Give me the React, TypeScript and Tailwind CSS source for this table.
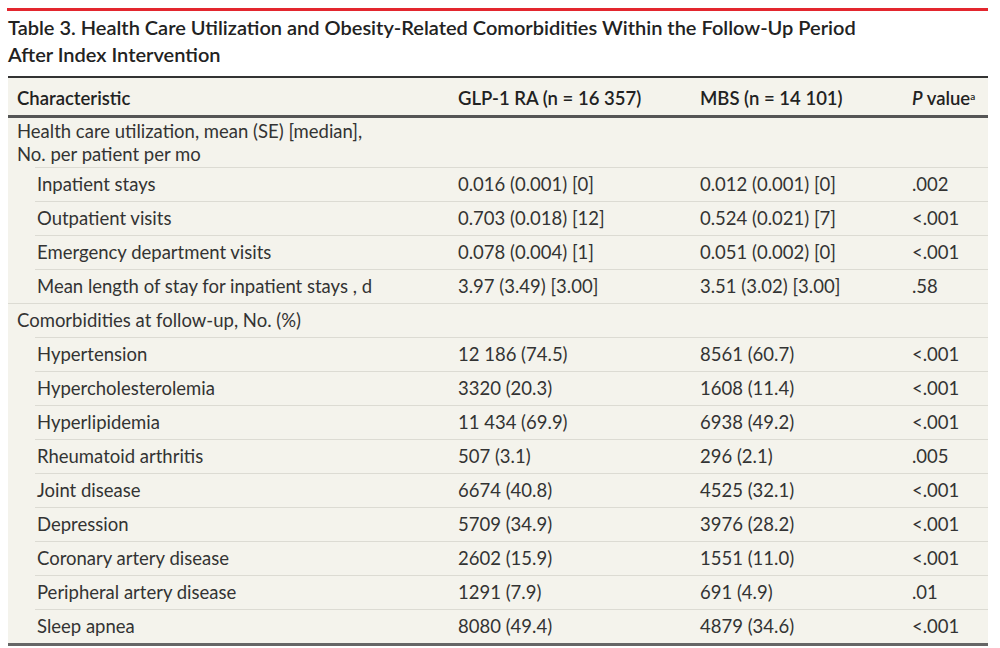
import React from 'react';

type Row = { label: string; glp: string; mbs: string; p: string };

const utilization: Row[] = [
  { label: 'Inpatient stays', glp: '0.016 (0.001) [0]', mbs: '0.012 (0.001) [0]', p: '.002' },
  { label: 'Outpatient visits', glp: '0.703 (0.018) [12]', mbs: '0.524 (0.021) [7]', p: '<.001' },
  { label: 'Emergency department visits', glp: '0.078 (0.004) [1]', mbs: '0.051 (0.002) [0]', p: '<.001' },
  { label: 'Mean length of stay for inpatient stays , d', glp: '3.97 (3.49) [3.00]', mbs: '3.51 (3.02) [3.00]', p: '.58' },
];

const comorbidities: Row[] = [
  { label: 'Hypertension', glp: '12 186 (74.5)', mbs: '8561 (60.7)', p: '<.001' },
  { label: 'Hypercholesterolemia', glp: '3320 (20.3)', mbs: '1608 (11.4)', p: '<.001' },
  { label: 'Hyperlipidemia', glp: '11 434 (69.9)', mbs: '6938 (49.2)', p: '<.001' },
  { label: 'Rheumatoid arthritis', glp: '507 (3.1)', mbs: '296 (2.1)', p: '.005' },
  { label: 'Joint disease', glp: '6674 (40.8)', mbs: '4525 (32.1)', p: '<.001' },
  { label: 'Depression', glp: '5709 (34.9)', mbs: '3976 (28.2)', p: '<.001' },
  { label: 'Coronary artery disease', glp: '2602 (15.9)', mbs: '1551 (11.0)', p: '<.001' },
  { label: 'Peripheral artery disease', glp: '1291 (7.9)', mbs: '691 (4.9)', p: '.01' },
  { label: 'Sleep apnea', glp: '8080 (49.4)', mbs: '4879 (34.6)', p: '<.001' },
];

function SubRow({ row }: { row: Row }) {
  return (
    <div className="ml-[27px] h-[34px] border-t border-[#dcdbd3] grid grid-cols-[415px_242px_212px_1fr] items-center">
      <div className="pl-[2px]">{row.label}</div>
      <div className="pl-[8px]">{row.glp}</div>
      <div className="pl-[8px]">{row.mbs}</div>
      <div className="pl-[8px]">{row.p}</div>
    </div>
  );
}

export default function App() {
  return (
    <div
      className="w-[1000px] h-[648px] bg-white text-[#333] overflow-hidden"
      style={{ fontFamily: 'Lato, "Noto Sans", sans-serif' }}
    >
      <div className="pt-[8px] px-[7px] w-[995px]">
        <div className="h-[3px] bg-[#e3262e]" />
        {/* Title */}
        <div className="pt-[3px] pl-[1px] text-[20px] leading-[27px] font-semibold text-[#222] h-[65px]">
          Table 3. Health Care Utilization and Obesity-Related Comorbidities Within the Follow-Up Period
          <br />
          After Index Intervention
        </div>

        {/* Table */}
        <div className="bg-[#f4f3ec] text-[18.5px] ml-[1px]">
          <div className="border-t-2 border-[#333]" />
          <div className="h-[37px] grid grid-cols-[442px_242px_212px_1fr] items-center pt-[4px] font-semibold text-[#222]">
            <div className="pl-[9px]">Characteristic</div>
            <div className="pl-[8px]">GLP-1 RA (n = 16 357)</div>
            <div className="pl-[8px]">MBS (n = 14 101)</div>
            <div className="pl-[8px] whitespace-nowrap">
              <span className="italic">P</span> value<sup className="text-[10px]">a</sup>
            </div>
          </div>
          <div className="border-t-[3px] border-[#555]" />

          <div className="h-[49px] pt-[2px] pl-[9px] leading-[23px]">
            Health care utilization, mean (SE) [median],
            <br />
            No. per patient per mo
          </div>
          {utilization.map((r) => (
            <SubRow key={r.label} row={r} />
          ))}

          <div className="h-[34px] border-t border-[#dcdbd3] flex items-center pl-[9px]">
            Comorbidities at follow-up, No. (%)
          </div>
          {comorbidities.map((r) => (
            <SubRow key={r.label} row={r} />
          ))}
          <div className="border-t-[3px] border-[#666]" />
        </div>
      </div>
    </div>
  );
}
